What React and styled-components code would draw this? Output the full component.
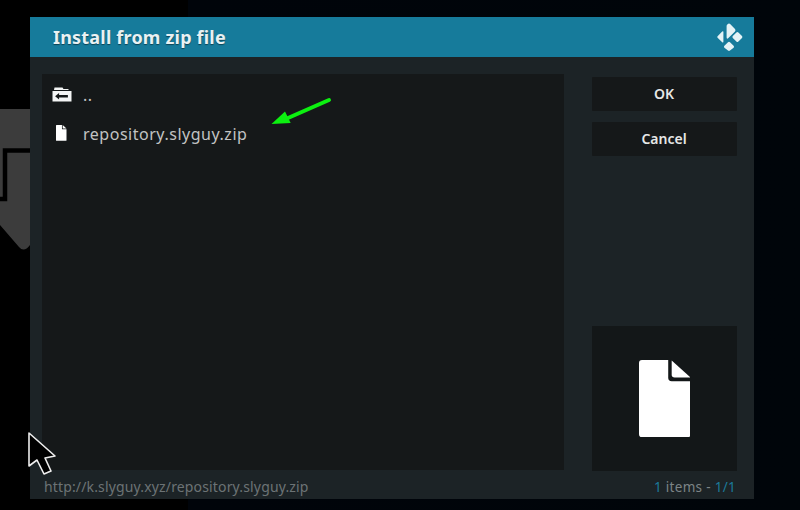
import React from 'react';
import styled, { createGlobalStyle } from 'styled-components';

const GlobalStyle = createGlobalStyle`
  html, body {
    margin: 0;
    padding: 0;
    height: 100%;
    background: #000;
  }
`;

const Page = styled.div`
  position: relative;
  width: 800px;
  height: 510px;
  overflow: hidden;
  padding: 17px 46px 11px 30px;
  box-sizing: border-box;
  font-family: 'Noto Sans', 'Open Sans', sans-serif;
  background: linear-gradient(90deg, #000 0, #000 188px, #00040a 188px, #00050a 100%);
`;

const BackdropArt = styled.svg`
  position: absolute;
  left: 0;
  top: 100px;
`;

const Cursor = styled.svg`
  position: absolute;
  left: 26px;
  top: 430px;
`;

const Pointer = styled.svg`
  position: absolute;
  left: 268px;
  top: 96px;
`;

const Dialog = styled.div`
  position: relative;
  height: 482px;
  display: flex;
  flex-direction: column;
  background: #1c2326;
`;

const Header = styled.header`
  height: 40px;
  flex: none;
  display: flex;
  align-items: center;
  justify-content: space-between;
  padding: 0 11px 0 23px;
  background: #167b9b;
`;

const Title = styled.h1`
  margin: 0;
  font-size: 18px;
  font-weight: 700;
  color: #e8f1f3;
  letter-spacing: 0.2px;
  text-shadow: 0 1px 1px rgba(0, 0, 0, 0.45);
`;

const Body = styled.div`
  flex: 1;
  display: flex;
  gap: 28px;
  padding: 17px 17px 0 12px;
  min-height: 0;
`;

const FileList = styled.ul`
  width: 522px;
  height: 396px;
  flex: none;
  margin: 0;
  padding: 0;
  list-style: none;
  background: #151819;
`;

const FileRow = styled.li`
  height: 39px;
  display: flex;
  align-items: center;
  &:first-child {
    margin-top: 1px;
  }
`;

const FileIconSlot = styled.span`
  width: 41px;
  flex: none;
  display: flex;
  justify-content: center;
  padding-right: 2px;
  box-sizing: border-box;
  margin-top: -1px;
`;

const FileName = styled.span`
  font-size: 16px;
  color: #c2c3c3;
  letter-spacing: 0.52px;
`;

const Side = styled.aside`
  width: 145px;
  height: 397px;
  flex: none;
  display: flex;
  flex-direction: column;
  padding-top: 3px;
  box-sizing: border-box;
  gap: 11.5px;
`;

const ActionButton = styled.button`
  height: 33.5px;
  flex: none;
  border: 0;
  padding: 0 1px 0 0;
  border-radius: 1px;
  background: #151819;
  color: #e6e7e7;
  font-family: inherit;
  font-size: 14px;
  font-weight: 600;
`;

const Preview = styled.div`
  margin-top: auto;
  height: 145px;
  flex: none;
  display: flex;
  align-items: center;
  justify-content: center;
  background: #131718;
`;

const Footer = styled.footer`
  height: 29px;
  flex: none;
  display: flex;
  align-items: center;
  justify-content: space-between;
  padding: 4px 18px 0 14px;
  box-sizing: border-box;
  font-size: 14px;
  color: #6c7375;
  letter-spacing: 0.15px;
`;

const Count = styled.span`
  color: #7d8486;
  font-size: 13.5px;
  letter-spacing: 0.3px;
`;

const Accent = styled.span`
  color: #1b7a99;
`;

const KodiLogo = () => (
  <svg width="28" height="28" viewBox="0 0 28 28" fill="#e4f3f6">
    <path d="M12.6 1.2 Q14 0 15.4 1.2 L20 6 Q21 7.2 20 8.4 L13.4 15 Q11.6 16.6 11.6 14.2 L11.6 3 Q11.6 2 12.6 1.2 Z" />
    <path d="M21.4 9.4 Q22.4 8.6 23.4 9.4 L27 13 Q27.8 14 27 15 L23.4 18.4 Q22.4 19.4 21.4 18.4 L17.8 15 Q17 14 17.8 13 Z" />
    <path d="M13 19.2 Q14 18.2 15 19.2 L18.6 22.8 Q19.4 23.8 18.6 24.8 L15 27.6 Q14 28.4 13 27.6 L9.4 24.8 Q8.6 23.8 9.4 22.8 Z" />
    <path d="M7.2 8.6 Q8.4 7.6 8.4 9 L8.4 18.8 Q8.4 20.2 7.2 19.2 L2.6 14.8 Q1.8 14 2.6 13.2 Z" />
  </svg>
);

const BackFolderIcon = () => (
  <svg width="20" height="15" viewBox="0 0 20 15">
    <path fill="#f4f5f5" d="M2.5 0.5 H10.5 L11.5 2 H16.5 V3 H2 Z" />
    <path
      fill="#f4f5f5"
      d="M0.5 4 H19.5 V14.5 H0.5 Z M7.1 6 L3.1 9.2 L7.1 12.4 V10.4 H15.9 V8 H7.1 Z"
      fillRule="evenodd"
    />
  </svg>
);

const FileIcon = ({ size = 11 }) => (
  <svg width={size} height={size * 1.5} viewBox="0 0 52 78">
    <path
      fill="#fff"
      d="M3 0 H29.5 V18 Q29.5 21.5 33 21.5 H52 V75 Q52 78 49 78 H3 Q0 78 0 75 V3 Q0 0 3 0 Z"
    />
    <path fill="#fff" d="M33 0.5 L52 17.7 H36 Q33 17.7 33 15 Z" />
  </svg>
);

const App = () => {
  return (
    <Page>
      <GlobalStyle />
      <BackdropArt width="30" height="160" viewBox="0 0 30 160">
        <path fill="#3c3c3c" d="M0 9 H30 V145 Q24 153 19 147 L0 125 Z" />
        <path
          fill="none"
          stroke="#000"
          strokeWidth="4.5"
          d="M30 50.5 H5 V99 H0"
        />
      </BackdropArt>
      <Dialog>
        <Header>
          <Title>Install from zip file</Title>
          <KodiLogo />
        </Header>
        <Body>
          <FileList>
            <FileRow>
              <FileIconSlot>
                <BackFolderIcon />
              </FileIconSlot>
              <FileName>..</FileName>
            </FileRow>
            <FileRow>
              <FileIconSlot>
                <FileIcon size={10.5} />
              </FileIconSlot>
              <FileName>repository.slyguy.zip</FileName>
            </FileRow>
          </FileList>
          <Side>
            <ActionButton>OK</ActionButton>
            <ActionButton>Cancel</ActionButton>
            <Preview>
              <FileIcon size={51.5} />
            </Preview>
          </Side>
        </Body>
        <Footer>
          <span>http://k.slyguy.xyz/repository.slyguy.zip</span>
          <Count>
            <Accent>1</Accent> items - <Accent>1/1</Accent>
          </Count>
        </Footer>
      </Dialog>
      <Pointer width="66" height="34" viewBox="0 0 66 34">
        <path d="M61 4 L20 22" stroke="#0cf010" strokeWidth="4" strokeLinecap="round" />
        <path fill="#0cf010" d="M3.5 28 L17 15.5 L22.7 27 Z" />
      </Pointer>
      <Cursor width="34" height="48" viewBox="0 0 34 48">
        <path
          fill="#000"
          stroke="#eee"
          strokeWidth="1.6"
          strokeLinejoin="round"
          d="M3 3 L3 36 L11 30 L18 44 L25 41 L19 28 L29 26 Z"
        />
      </Cursor>
    </Page>
  );
};

export default App;
